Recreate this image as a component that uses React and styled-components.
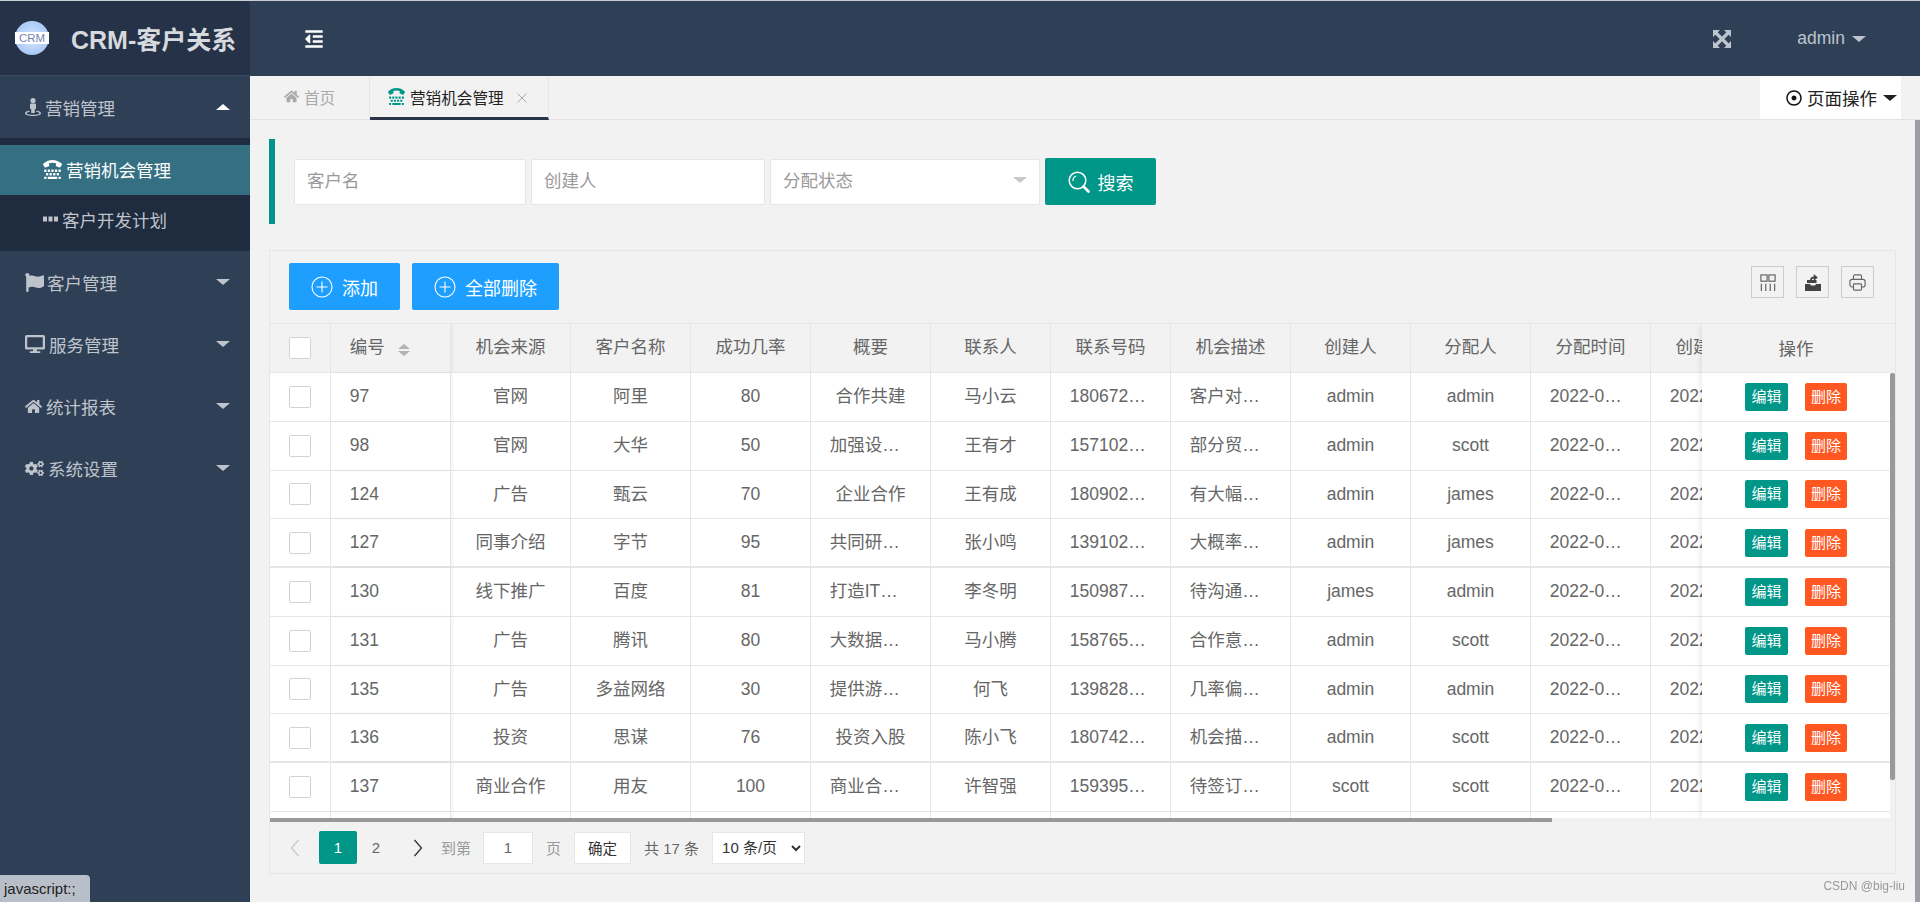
import React from 'react';
import styled, { createGlobalStyle } from 'styled-components';
import {
  FaTty,
  FaFlag,
  FaDesktop,
  FaHome,
  FaCogs,
  FaOutdent,
  FaRegDotCircle,
} from 'react-icons/fa';

const GlobalStyle = createGlobalStyle`
  html, body {
    margin: 0;
    padding: 0;
    overflow: hidden;
  }
  body {
    font-family: "Liberation Sans", "Noto Sans CJK SC", sans-serif;
    font-size: 17.5px;
    color: #666;
    background: #f2f2f2;
  }
  * {
    box-sizing: border-box;
  }
  input, select, button {
    font-family: inherit;
  }
`;

const Page = styled.div`
  width: 1920px;
  height: 902px;
  display: grid;
  grid-template-columns: 250px 1fr;
  grid-template-rows: 76px 1fr;
  overflow: hidden;
`;

/* top bar */
const LogoBox = styled.div`
  background: #253247;
  border-top: 1px solid #c9ced6;
  border-bottom: 1px solid #3c4a5f;
  display: flex;
  align-items: center;
  padding-left: 15px;
`;
const LogoCircle = styled.div`
  width: 34px;
  height: 34px;
  border-radius: 50%;
  background: radial-gradient(circle, #d6e6fb 0%, #a9c9f6 72%, #2f5fa8 100%);
  display: flex;
  align-items: center;
  justify-content: center;
  margin-right: 22px;
  span {
    background: #fff;
    color: #7283b3;
    font-size: 11.5px;
    line-height: 12px;
    width: 34px;
    text-align: center;
  }
`;
const LogoTitle = styled.div`
  color: #d6dade;
  font-size: 25px;
  font-weight: 700;
  white-space: nowrap;
`;
const TopBar = styled.div`
  background: #2f4056;
  border-top: 1px solid #c9ced6;
  display: flex;
  align-items: center;
  padding-left: 54px;
  color: #fff;
`;
const TopRight = styled.div`
  margin-left: auto;
  display: flex;
  align-items: center;
  color: #bcc4cf;
  padding-right: 54px;
`;
const AdminName = styled.span`
  margin-left: 66px;
  margin-right: 7px;
`;
const Caret = styled.i`
  display: inline-block;
  width: 0;
  height: 0;
  border-left: ${(p) => p.$size || 7}px solid transparent;
  border-right: ${(p) => p.$size || 7}px solid transparent;
  ${(p) => (p.$up ? 'border-bottom' : 'border-top')}: ${(p) => (p.$size || 7) - 1}px solid ${(p) => p.$color || 'currentColor'};
`;

/* side menu */
const Side = styled.nav`
  background: #2f4056;
  color: #bfc4cc;
`;
const MenuRow = styled.div`
  height: 62px;
  display: flex;
  align-items: center;
  padding: 0 20px 0 25px;
  justify-content: space-between;
`;
const MenuLabel = styled.span`
  display: flex;
  align-items: center;
  gap: ${(p) => p.$gap || 3}px;
  white-space: nowrap;
  svg {
    font-size: ${(p) => p.$icon || 19}px;
  }
`;
const SubMenu = styled.div`
  background: #1f2b3e;
  padding: 7px 0 6px;
`;
const SubItem = styled.div`
  height: 50px;
  display: flex;
  align-items: center;
  gap: ${(p) => p.$gap || 4}px;
  padding: 0 0 2px 43px;
  background: ${(p) => (p.$active ? '#356f82' : 'transparent')};
  color: ${(p) => (p.$active ? '#fff' : '#bfc4cc')};
  svg {
    font-size: 19px;
  }
`;

/* main */
const Main = styled.main`
  display: flex;
  min-width: 0;
  min-height: 0;
  flex-direction: column;
`;
const TabBar = styled.div`
  height: 44px;
  display: flex;
  align-items: stretch;
  border-bottom: 1px solid #e2e2e2;
  padding-right: 19px;
`;
const Tab = styled.div`
  display: flex;
  align-items: center;
  width: ${(p) => p.$width}px;
  padding-left: ${(p) => p.$pad}px;
  border-right: 1px solid #e6e6e6;
  color: ${(p) => (p.$active ? '#222' : '#aaa')};
  font-size: 15.6px;
  gap: 5px;
  height: 44px;
  border-bottom: 3px solid ${(p) => (p.$active ? '#2a3549' : 'transparent')};
  white-space: nowrap;
  svg {
    font-size: ${(p) => (p.$active ? '17px' : '15px')};
    color: ${(p) => (p.$active ? '#009688' : '#aaa')};
  }
`;
const CloseMark = styled.svg`
  width: 10px;
  height: 10px;
  margin-left: 8px;
  margin-top: 2px;
  fill: none;
  stroke: #aaa;
  stroke-width: 1;
`;
const PageOps = styled.div`
  margin-left: auto;
  width: 141px;
  height: 43px;
  background: #fff;
  color: #222;
  display: flex;
  align-items: center;
  padding-left: 26px;
  gap: 5px;
  white-space: nowrap;
  svg {
    font-size: 16px;
    color: #111;
  }
  i {
    margin-left: 1px;
  }
`;
const BodyWrap = styled.div`
  flex: 1;
  display: flex;
  min-height: 0;
`;
const Content = styled.div`
  flex: 1;
  min-width: 0;
  padding: 19px 19px 0;
`;
const PageScroll = styled.div`
  width: 5px;
  background: #9e9ea6;
`;

const SearchBlock = styled.div`
  height: 85px;
  border-left: 6px solid #009688;
  padding-left: 19px;
  display: flex;
  align-items: center;
  gap: 5px;
`;
const SearchInput = styled.input`
  width: ${(p) => p.$width}px;
  height: 46px;
  border: 1px solid #e6e6e6;
  background: #fff;
  padding: 0 12px;
  font-size: 17.5px;
  color: #666;
  border-radius: 2px;
  outline: none;
  &::placeholder {
    color: #9a9a9a;
  }
`;
const SelectBox = styled.div`
  width: 270px;
  height: 46px;
  border: 1px solid #e6e6e6;
  background: #fff;
  padding: 0 12px 4px;
  color: #9a9a9a;
  border-radius: 2px;
  display: flex;
  align-items: center;
  justify-content: space-between;
`;
const SearchButton = styled.button`
  width: 111px;
  height: 47px;
  border: 0;
  border-radius: 2px;
  background: #009688;
  color: #fff;
  font-size: 18px;
  display: flex;
  align-items: center;
  justify-content: center;
  gap: 8px;
`;

const Card = styled.section`
  margin-top: 26px;
  border: 1px solid #e6e6e6;
  height: 624px;
`;
const ToolBar = styled.div`
  height: 72px;
  display: flex;
  align-items: flex-start;
  padding: 12px 21px 0 19px;
  gap: 12px;
`;
const BlueButton = styled.button`
  height: 47px;
  width: ${(p) => p.$width}px;
  border: 0;
  border-radius: 2px;
  background: #1e9fff;
  color: #fff;
  font-size: 18px;
  display: flex;
  align-items: center;
  justify-content: center;
  gap: 9px;
`;
const ToolIcons = styled.div`
  margin-left: auto;
  display: flex;
  gap: 12px;
  padding-top: 3px;
`;
const ToolIcon = styled.div`
  width: 33px;
  height: 32px;
  border: 1px solid #ccc;
  color: #555;
  display: flex;
  align-items: center;
  justify-content: center;
`;

/* table */
const TableFrame = styled.div`
  display: flex;
  height: 495px;
  border-top: 1px solid #e6e6e6;
`;
const ScrollPart = styled.div`
  width: 1432px;
  flex-shrink: 0;
  overflow: hidden;
`;
const Row = styled.div`
  display: grid;
  grid-template-columns: 61px repeat(12, 120px);
  width: 1501px;
  height: ${(p) => (p.$head ? '49px' : '48.75px')};
  background: ${(p) => (p.$head ? '#f2f2f2' : '#fff')};
  border-bottom: ${(p) => (p.$thick ? 2 : 1)}px solid #e6e6e6;
`;
const Cell = styled.div`
  border-right: 1px solid #e6e6e6;
  padding: 0 18.75px;
  line-height: 47px;
  white-space: nowrap;
  overflow: hidden;
  text-overflow: ellipsis;
  text-align: ${(p) => (p.$left ? 'left' : 'center')};
  ${(p) => p.$edge && 'box-shadow: 2px 0 3px rgba(0,0,0,.05); position: relative;'}
`;
const CheckCell = styled(Cell)`
  padding: 0 0 0 19px;
  display: flex;
  align-items: center;
`;
const CheckMark = styled.span`
  width: 22px;
  height: 22px;
  background: #fff;
  border: 1px solid #d2d2d2;
  border-radius: 2px;
`;
const SortMark = styled.span`
  display: inline-flex;
  flex-direction: column;
  gap: 2px;
  margin-left: 13px;
  vertical-align: 4px;
  color: #b2b2b2;
`;
const FixedPart = styled.div`
  flex: 1;
  min-width: 0;
  overflow: hidden;
  box-shadow: -1px 0 6px rgba(0,0,0,.1);
  clip-path: inset(0 0 0 -10px);
  position: relative;
`;
const FixedHead = styled.div`
  height: 49px;
  background: #f2f2f2;
  border-bottom: 1px solid #e6e6e6;
  display: flex;
  align-items: center;
  justify-content: center;
  padding-bottom: 2px;
`;
const FixedRow = styled.div`
  height: 48.75px;
  background: #fff;
  border-bottom: ${(p) => (p.$thick ? 2 : 1)}px solid #e6e6e6;
  display: flex;
  align-items: center;
  justify-content: center;
  gap: 17px;
`;
const SmallButton = styled.span`
  width: ${(p) => p.$width || 43}px;
  height: 28px;
  line-height: 27px;
  text-align: center;
  background: ${(p) => p.$color};
  color: #fff;
  font-size: 15px;
  border-radius: 2px;
`;
const VTrack = styled.div`
  width: 5px;
  flex-shrink: 0;
  background: #f1f1f1;
  padding-top: 49px;
`;
const VThumb = styled.div`
  height: 407px;
  background: #999;
  border-radius: 2px;
`;
const HTrack = styled.div`
  height: 4px;
  background: #f1f1f1;
`;
const HThumb = styled.div`
  width: 1282px;
  height: 4px;
  background: #999;
`;

/* pager */
const Pager = styled.div`
  height: 51px;
  display: flex;
  align-items: center;
  font-size: 15px;
  color: #999;
  padding-left: 20px;
`;
const PagerArrow = styled.span`
  display: flex;
  color: ${(p) => (p.$off ? '#c9c9c9' : '#333')};
  margin: ${(p) => p.$margin};
`;
const PageNo = styled.span`
  width: 38px;
  height: 33px;
  line-height: 33px;
  text-align: center;
  border-radius: 2px;
  background: ${(p) => (p.$active ? '#009688' : 'transparent')};
  color: ${(p) => (p.$active ? '#fff' : '#666')};
`;
const PagerInput = styled.input`
  width: 50px;
  height: 32px;
  margin: 0 13px 0 12px;
  border: 1px solid #e6e6e6;
  background: #fff;
  text-align: center;
  font-size: 15px;
  color: #666;
  outline: none;
`;
const PagerButton = styled.button`
  width: 57px;
  height: 32px;
  margin: 0 13px 0 13px;
  border: 1px solid #e6e6e6;
  background: #fff;
  color: #333;
  font-size: 14.5px;
`;
const PagerSelect = styled.select`
  width: 93px;
  height: 32px;
  margin-left: 13px;
  padding-left: 5px;
  border: 1px solid #e6e6e6;
  background: #fff;
  color: #333;
  font-size: 15px;
  outline: none;
`;
const PagerText = styled.span`
  color: ${(p) => p.$color || '#999'};
  white-space: nowrap;
`;

/* overlays */
const StatusTip = styled.div`
  position: fixed;
  left: 0;
  bottom: 0;
  width: 90px;
  height: 27px;
  background: #b9bfc8;
  border-top-right-radius: 4px;
  color: #222;
  font-size: 15px;
  line-height: 27px;
  padding-left: 4px;
`;
const Watermark = styled.div`
  position: fixed;
  right: 15px;
  bottom: 9px;
  color: #999;
  font-size: 12px;
`;

const PersonIcon = () => (
  <svg width="16" height="18" viewBox="0 0 16 18" fill="currentColor">
    <circle cx="8" cy="2.6" r="2.6" />
    <path d="M5 6.4c0-.6.5-1 1-1h4c.5 0 1 .4 1 1V11H9.8v4H6.2v-4H5z" />
    <path d="M4.6 12.6C2 13.1 0 14 0 15.2 0 16.900 3.600 18 8 18s8-1.100 8-2.800c0-1.200-2-2.100-4.600-2.600v1.100c1.700.3 3 .9 3 1.500 0 .9-2.900 1.600-6.400 1.600s-6.400-.7-6.400-1.600c0-.6 1.300-1.200 3-1.500z" />
  </svg>
);
const ExpandIcon = () => (
  <svg width="18" height="18" viewBox="0 0 18 18" fill="currentColor">
    <path d="M0 0h7L0 7zM18 0v7l-7-7zM0 18v-7l7 7zM18 18h-7l7-7z" />
    <path d="M3 3l12 12M15 3L3 15" stroke="currentColor" strokeWidth="3.2" />
  </svg>
);
const DotsIcon = () => (
  <svg width="15" height="6" viewBox="0 0 15 6" fill="currentColor">
    <rect x="0" y="0.5" width="4" height="5" />
    <rect x="5.5" y="0.5" width="4" height="5" />
    <rect x="11" y="0.5" width="4" height="5" />
  </svg>
);
const PlusCircle = () => (
  <svg width="22" height="22" viewBox="0 0 22 22" fill="none" stroke="currentColor" strokeWidth="1.1">
    <circle cx="11" cy="11" r="10" />
    <path d="M11 5.5v11M5.5 11h11" />
  </svg>
);
const SearchIcon = () => (
  <svg width="22" height="22" viewBox="0 0 22 22" fill="none" stroke="currentColor">
    <circle cx="9.5" cy="9.5" r="8.3" strokeWidth="1.5" />
    <path d="M5 10a5 5 0 0 1 3-5" strokeWidth="1.2" />
    <path d="M15.5 15.5l5 5" strokeWidth="2.6" strokeLinecap="round" />
  </svg>
);
const ColsIcon = () => (
  <svg width="16" height="17" viewBox="0 0 18 19" fill="none" stroke="currentColor" strokeWidth="1.2">
    <rect x="1" y="1" width="7" height="7" />
    <rect x="10" y="1" width="7" height="7" />
    <path d="M1.500 11v8M6.500 11v8M11.500 11v8M16.500 11v8" />
  </svg>
);
const ExportIcon = () => (
  <svg width="16" height="17" viewBox="0 0 16 17" fill="#444">
    <path d="M0 10h5l1 1.500h4l1-1.500h5v7H0z" />
    <path d="M2 9V6h3c.2-2 1.400-3.300 3.800-3.500V0l4 3.500-4 3.500V4.500C7.700 4.700 7 5.200 6.800 6H11.500v3z" />
  </svg>
);
const PrintIcon = () => (
  <svg width="17" height="17" viewBox="0 0 19 19" fill="none" stroke="#666" strokeWidth="1.3">
    <path d="M5 6V2.500C5 1.700 5.700 1 6.500 1h6c.8 0 1.500.7 1.500 1.500V6" />
    <rect x="1" y="6" width="17" height="8.500" rx="2.500" />
    <rect x="5" y="11" width="9" height="7" rx="1" fill="#f2f2f2" />
  </svg>
);
const ChevronIcon = ({ left }) => (
  <svg width="10" height="18" viewBox="0 0 10 18" fill="none" stroke="currentColor" strokeWidth="1.3">
    <path d={left ? 'M8.500 1L1.500 9l7 8' : 'M1.500 1l7 8-7 8'} />
  </svg>
);

const columns = ['机会来源', '客户名称', '成功几率', '概要', '联系人', '联系号码', '机会描述', '创建人', '分配人', '分配时间', '创建时间'];

const rows = [
  ['97', '官网', '阿里', '80', '合作共建', '马小云', '18067201234', '客户对接洽谈中', 'admin', 'admin'],
  ['98', '官网', '大华', '50', '加强设备合作', '王有才', '15710234567', '部分贸易往来', 'admin', 'scott'],
  ['124', '广告', '甄云', '70', '企业合作', '王有成', '18090212345', '有大幅增长空间', 'admin', 'james'],
  ['127', '同事介绍', '字节', '95', '共同研发项目', '张小鸣', '13910212345', '大概率能成功', 'admin', 'james'],
  ['130', '线下推广', '百度', '81', '打造IT生态', '李冬明', '15098712345', '待沟通后确认', 'james', 'admin'],
  ['131', '广告', '腾讯', '80', '大数据合作', '马小腾', '15876512345', '合作意向较强', 'admin', 'scott'],
  ['135', '广告', '多益网络', '30', '提供游戏资源', '何飞', '13982812345', '几率偏低一些', 'admin', 'admin'],
  ['136', '投资', '思谋', '76', '投资入股', '陈小飞', '18074212345', '机会描述内容', 'admin', 'scott'],
  ['137', '商业合作', '用友', '100', '商业合作协议', '许智强', '15939512345', '待签订合同', 'scott', 'scott'],
];

const MENU = [
  { icon: <FaFlag />, label: '客户管理', gap: 3, size: 19 },
  { icon: <FaDesktop />, label: '服务管理', gap: 4, size: 20 },
  { icon: <FaHome />, label: '统计报表', gap: 4, size: 17 },
  { icon: <FaCogs />, label: '系统设置', gap: 4, size: 19 },
];

export default function App() {
  return (
    <Page>
      <GlobalStyle />
      <LogoBox>
        <LogoCircle>
          <span>CRM</span>
        </LogoCircle>
        <LogoTitle>CRM-客户关系</LogoTitle>
      </LogoBox>
      <TopBar>
        <FaOutdent size={20} />
        <TopRight>
          <ExpandIcon />
          <AdminName>admin</AdminName>
          <Caret />
        </TopRight>
      </TopBar>

      <Side>
        <MenuRow>
          <MenuLabel $gap={4}>
            <PersonIcon />
            营销管理
          </MenuLabel>
          <Caret $up $color="#fff" />
        </MenuRow>
        <SubMenu>
          <SubItem $active>
            <FaTty />
            营销机会管理
          </SubItem>
          <SubItem>
            <DotsIcon />
            客户开发计划
          </SubItem>
        </SubMenu>
        {MENU.map((m) => (
          <MenuRow key={m.label}>
            <MenuLabel $gap={m.gap} $icon={m.size}>
              {m.icon}
              {m.label}
            </MenuLabel>
            <Caret />
          </MenuRow>
        ))}
      </Side>

      <Main>
        <TabBar>
          <Tab $width={120} $pad={34}>
            <FaHome />
            首页
          </Tab>
          <Tab $active $width={179} $pad={18}>
            <FaTty />
            营销机会管理
            <CloseMark viewBox="0 0 10 10">
              <path d="M.5.5l9 9M9.500.5l-9 9" />
            </CloseMark>
          </Tab>
          <PageOps>
            <FaRegDotCircle />
            页面操作
            <Caret />
          </PageOps>
        </TabBar>
        <BodyWrap>
          <Content>
            <SearchBlock>
              <SearchInput $width={232} placeholder="客户名" />
              <SearchInput $width={234} placeholder="创建人" />
              <SelectBox>
                分配状态
                <Caret $color="#c9c9c9" $size={7.5} />
              </SelectBox>
              <SearchButton>
                <SearchIcon />
                搜索
              </SearchButton>
            </SearchBlock>

            <Card>
              <ToolBar>
                <BlueButton $width={111}>
                  <PlusCircle />
                  添加
                </BlueButton>
                <BlueButton $width={147}>
                  <PlusCircle />
                  全部删除
                </BlueButton>
                <ToolIcons>
                  <ToolIcon>
                    <ColsIcon />
                  </ToolIcon>
                  <ToolIcon>
                    <ExportIcon />
                  </ToolIcon>
                  <ToolIcon>
                    <PrintIcon />
                  </ToolIcon>
                </ToolIcons>
              </ToolBar>

              <TableFrame>
                <ScrollPart>
                  <Row $head>
                    <CheckCell>
                      <CheckMark />
                    </CheckCell>
                    <Cell $left $edge>
                      编号
                      <SortMark>
                        <Caret $up $size={6} />
                        <Caret $size={6} />
                      </SortMark>
                    </Cell>
                    {columns.map((c) => (
                      <Cell key={c}>{c}</Cell>
                    ))}
                  </Row>
                  {rows.map((r, i) => (
                    <Row key={r[0]} $thick={(i + 1) % 4 === 0}>
                      <CheckCell>
                        <CheckMark />
                      </CheckCell>
                      <Cell $left $edge>
                        {r[0]}
                      </Cell>
                      {r.slice(1).map((v, j) => (
                        <Cell key={j}>{v}</Cell>
                      ))}
                      <Cell>2022-03-15 10:20</Cell>
                      <Cell>2022-03-15 10:20</Cell>
                    </Row>
                  ))}
                  <Row>
                    <Cell />
                    <Cell $edge />
                    {columns.map((c) => (
                      <Cell key={c} />
                    ))}
                  </Row>
                </ScrollPart>
                <FixedPart>
                  <FixedHead>操作</FixedHead>
                  {rows.map((r, i) => (
                    <FixedRow key={r[0]} $thick={(i + 1) % 4 === 0}>
                      <SmallButton $color="#009688">编辑</SmallButton>
                      <SmallButton $color="#ff5722" $width={42}>
                        删除
                      </SmallButton>
                    </FixedRow>
                  ))}
                  <FixedRow />
                </FixedPart>
                <VTrack>
                  <VThumb />
                </VTrack>
              </TableFrame>
              <HTrack>
                <HThumb />
              </HTrack>

              <Pager>
                <PagerArrow $off $margin="0 19px 0 0">
                  <ChevronIcon left />
                </PagerArrow>
                <PageNo $active>1</PageNo>
                <PageNo>2</PageNo>
                <PagerArrow $margin="0 18px 0 18px">
                  <ChevronIcon />
                </PagerArrow>
                <PagerText>到第</PagerText>
                <PagerInput defaultValue="1" />
                <PagerText>页</PagerText>
                <PagerButton>确定</PagerButton>
                <PagerText $color="#666">共 17 条</PagerText>
                <PagerSelect defaultValue="10">
                  <option value="10">10 条/页</option>
                  <option value="20">20 条/页</option>
                </PagerSelect>
              </Pager>
            </Card>
          </Content>
          <PageScroll />
        </BodyWrap>
      </Main>

      <StatusTip>javascript:;</StatusTip>
      <Watermark>CSDN @big-liu</Watermark>
    </Page>
  );
}
